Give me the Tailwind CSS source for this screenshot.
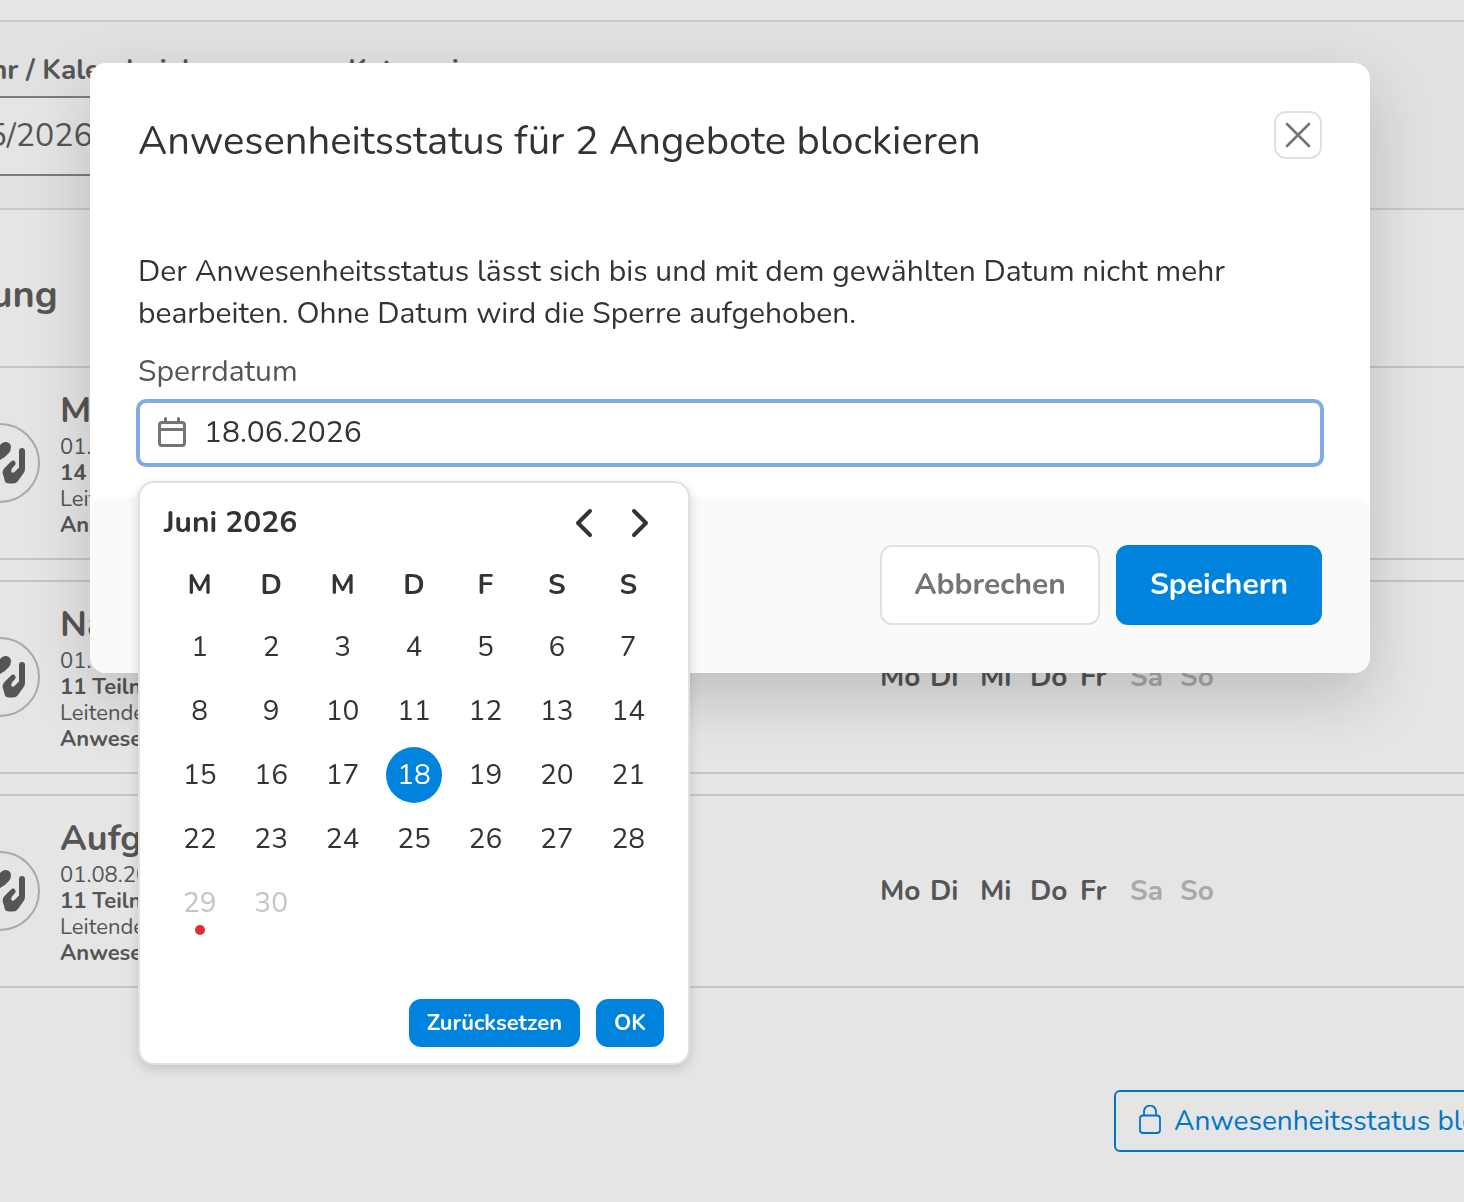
<!DOCTYPE html>
<html lang="de">
<head>
  <meta charset="UTF-8">
  <meta name="viewport" content="width=device-width, initial-scale=1.0">
  <title>Anwesenheitsstatus blockieren</title>
  <script src="https://cdn.jsdelivr.net/npm/@tailwindcss/browser@4"></script>
</head>
<body class="bg-[#e5e5e5] font-[Nunito,Lato,sans-serif] text-[#555] min-h-screen overflow-hidden">

  <!-- Shared icon shapes -->
  <svg class="hidden">
    <symbol id="logo" viewBox="0 0 80 80" fill="currentColor">
      <path d="M40 22q3-3.500 6-3 5 .5 5 5.500 0 3-2.500 6Q45 34.500 40 37q-5-2.500-8.500-6.500Q29 27.500 29 24.500q0-5 5-5.500 3-.5 6 3z"/>
      <path id="hand" d="M42.500 50q0-3 2-5l6-6q3-2.500 4.500-.5 1.500 2-.5 4l-2.500 3q-1.500 3 0 4 1 .8 2.500-.5l4.500-4.500V28a3 3 0 0 1 6 0v17.500q0 2-1 4l-6 8.500q-2 2.500-5 2.500h-3.500q-5 0-5-4z"/>
      <use href="#hand" transform="matrix(-1 0 0 1 80 0)"/>
    </symbol>
  </svg>

  <main class="overflow-hidden">
    <!-- Filter bar -->
    <section class="mt-5 border-y-2 border-[#c9c9c9] bg-[#e1e1e1] pt-7 pb-8">
      <div class="-ml-26 grid grid-cols-[408px_400px] gap-11">
        <div>
          <label for="year" class="block h-[46px] text-[28px] leading-10 font-bold whitespace-nowrap">Schuljahr / Kalenderjahr</label>
          <select id="year" class="block h-20 w-full appearance-none rounded-lg border-2 border-[#7c7c7c] bg-[#e5e5e5] px-8 text-[32px]">
            <option>2025/2026</option>
            <option>2026/2027</option>
          </select>
        </div>
        <div>
          <label for="category" class="block h-[46px] text-[28px] leading-10 font-bold">Kategorie</label>
          <select id="category" class="block h-20 w-full appearance-none rounded-lg border-2 border-[#7c7c7c] bg-[#e5e5e5] px-8 text-[32px]">
            <option>Alle</option>
          </select>
        </div>
      </div>
    </section>

    <h2 class="-ml-32 flex h-[156px] items-center pt-3 text-[38px] font-bold"><span class="w-46 text-right">Betreuung</span></h2>

    <!-- Offers -->
    <ul id="offers" class="flex flex-col gap-5">
      <li class="-ml-10 grid grid-cols-[80px_800px_auto] items-center justify-start gap-5 border-y-2 border-[#c5c5c5] py-5">
        <span class="flex size-20 items-center justify-center rounded-full border-2 border-[#a9a9a9]"><svg class="size-20 shrink-0"><use href="#logo"/></svg></span>
        <div class="text-[22px] leading-[26px]">
          <h3 class="text-[36px] leading-[46px] font-bold">Mittagstisch</h3>
          <p>01.08.2025 - 31.07.2026</p>
          <p class="font-bold">14 Teilnehmende</p>
          <p>Leitende: 2</p>
          <p class="font-bold">Anwesenheit offen</p>
        </div>
        <div class="grid grid-cols-[repeat(7,50px)] text-[28px] leading-10 font-bold">
          <span>Mo</span><span>Di</span><span>Mi</span><span>Do</span><span>Fr</span><span class="text-[#a9a9a9]">Sa</span><span class="text-[#a9a9a9]">So</span>
        </div>
      </li>
      <li class="-ml-10 grid grid-cols-[80px_800px_auto] items-center justify-start gap-5 border-y-2 border-[#c5c5c5] py-5">
        <span class="flex size-20 items-center justify-center rounded-full border-2 border-[#a9a9a9]"><svg class="size-20 shrink-0"><use href="#logo"/></svg></span>
        <div class="text-[22px] leading-[26px]">
          <h3 class="text-[36px] leading-[46px] font-bold">Nachmittag</h3>
          <p>01.08.2025 - 31.07.2026</p>
          <p class="font-bold">11 Teilnehmende</p>
          <p>Leitende: 2</p>
          <p class="font-bold">Anwesenheit offen</p>
        </div>
        <div class="grid grid-cols-[repeat(7,50px)] text-[28px] leading-10 font-bold">
          <span>Mo</span><span>Di</span><span>Mi</span><span>Do</span><span>Fr</span><span class="text-[#a9a9a9]">Sa</span><span class="text-[#a9a9a9]">So</span>
        </div>
      </li>
      <li class="-ml-10 grid grid-cols-[80px_800px_auto] items-center justify-start gap-5 border-y-2 border-[#c5c5c5] py-5">
        <span class="flex size-20 items-center justify-center rounded-full border-2 border-[#a9a9a9]"><svg class="size-20 shrink-0"><use href="#logo"/></svg></span>
        <div class="text-[22px] leading-[26px]">
          <h3 class="text-[36px] leading-[46px] font-bold">Aufgabenhilfe</h3>
          <p>01.08.2025 - 31.07.2026</p>
          <p class="font-bold">11 Teilnehmende</p>
          <p>Leitende: 2</p>
          <p class="font-bold">Anwesenheit offen</p>
        </div>
        <div class="grid grid-cols-[repeat(7,50px)] text-[28px] leading-10 font-bold">
          <span>Mo</span><span>Di</span><span>Mi</span><span>Do</span><span>Fr</span><span class="text-[#a9a9a9]">Sa</span><span class="text-[#a9a9a9]">So</span>
        </div>
      </li>
    </ul>

    <div class="-mr-[74px] mt-[102px] flex justify-end">
      <button class="flex h-[62px] w-106 items-center gap-2.5 rounded-md border-2 border-[#0076c6] px-5 text-[28px] whitespace-nowrap text-[#0076c6]">
        <svg class="h-8 w-7 shrink-0" viewBox="0 0 28 32" fill="none" stroke="currentColor" stroke-width="1.8">
          <rect x="4" y="10.500" width="20" height="17.500" rx="3"/>
          <path d="M8 10.500V6.500a6 6 0 0 1 12 0v4"/>
        </svg>
        Anwesenheitsstatus blockieren
      </button>
    </div>
  </main>

  <!-- Modal -->
  <div class="fixed inset-0 flex items-start justify-center pt-[63px] pr-1">
    <div role="dialog" aria-labelledby="modalTitle" class="w-full max-w-7xl rounded-2xl bg-white text-[#333] shadow-[0_24px_64px_rgba(0,0,0,0.175)]">
      <header class="flex items-start justify-between px-12 pt-12">
        <h1 id="modalTitle" class="text-[40px] leading-[60px]">Anwesenheitsstatus für 2 Angebote blockieren</h1>
        <button aria-label="Schliessen" class="flex size-12 items-center justify-center rounded-xl border-2 border-[#e1e1e1] text-[#757575]">
          <svg class="size-7 shrink-0" viewBox="0 0 28 28" fill="none" stroke="currentColor" stroke-width="2.6" stroke-linecap="round"><path d="M3 3l22 22M25 3L3 25"/></svg>
        </button>
      </header>

      <div class="px-12 pt-20 pb-[30px] text-[30px] leading-[42px]">
        <p>Der Anwesenheitsstatus lässt sich bis und mit dem gewählten Datum nicht mehr bearbeiten. Ohne Datum wird die Sperre aufgehoben.</p>
        <label for="lockDate" class="mt-4 mb-1.5 block text-[#555]">Sperrdatum</label>

        <div class="relative -mx-0.5">
          <input id="lockDate" type="text" value="18.06.2026" class="block h-[68px] w-full rounded-[10px] border-4 border-[#82abe6] pr-4 pb-0.5 pl-16 outline-none">
          <svg class="pointer-events-none absolute top-[18px] left-[22px] h-8 w-7 text-[#757575]" viewBox="0 0 28 32" fill="none" stroke="currentColor" stroke-width="3" stroke-linecap="round">
            <rect x="1.5" y="5.500" width="25" height="23" rx="2.500"/>
            <path d="M2 12.500h24M7.500 1.500V5M20.500 1.500V5"/>
          </svg>

          <!-- Date picker -->
          <div class="absolute top-full left-0.5 mt-3.5 w-[552px] rounded-2xl border-2 border-[#e1e1e1] bg-white px-6 pt-3 pb-4 text-[28px] shadow-[0_4px_12px_rgba(0,0,0,0.15)]">
            <div class="-mr-1 flex items-center">
              <span id="month" class="grow text-[30px] font-bold">Juni 2026</span>
              <button aria-label="Vorheriger Monat" class="flex size-14 items-center justify-center">
                <svg class="size-8" viewBox="0 0 32 32" fill="none" stroke="currentColor" stroke-width="4" stroke-linecap="round" stroke-linejoin="round"><path d="M22 4L10 16l12 12"/></svg>
              </button>
              <button aria-label="Nächster Monat" class="flex size-14 items-center justify-center">
                <svg class="size-8" viewBox="0 0 32 32" fill="none" stroke="currentColor" stroke-width="4" stroke-linecap="round" stroke-linejoin="round"><path d="M10 4l12 12-12 12"/></svg>
              </button>
            </div>

            <table aria-labelledby="month" class="w-full table-fixed text-center">
              <thead>
                <tr class="h-16 font-bold">
                  <th class="pt-1">M</th><th class="pt-1">D</th><th class="pt-1">M</th><th class="pt-1">D</th><th class="pt-1">F</th><th class="pt-1">S</th><th class="pt-1">S</th>
                </tr>
              </thead>
              <tbody>
                <tr class="h-16"><td>1</td><td>2</td><td>3</td><td>4</td><td>5</td><td>6</td><td>7</td></tr>
                <tr class="h-16"><td>8</td><td>9</td><td>10</td><td>11</td><td>12</td><td>13</td><td>14</td></tr>
                <tr class="h-16"><td>15</td><td>16</td><td>17</td><td><span class="mx-auto flex size-14 items-center justify-center rounded-full bg-[#0083dd] text-white">18</span></td><td>19</td><td>20</td><td>21</td></tr>
                <tr class="h-16"><td>22</td><td>23</td><td>24</td><td>25</td><td>26</td><td>27</td><td>28</td></tr>
                <tr class="h-16 text-[#c4c4c4]"><td class="relative">29<span class="absolute bottom-0 left-1/2 size-2.5 -translate-x-1/2 rounded-full bg-[#e02b35]"></span></td><td>30</td><td></td><td></td><td></td><td></td><td></td></tr>
                <tr class="h-16"><td colspan="7"></td></tr>
              </tbody>
            </table>

            <div class="flex justify-end gap-4 text-[22px] font-bold text-white">
              <button class="h-12 rounded-xl bg-[#0083dd] px-[18px]">Zurücksetzen</button>
              <button class="h-12 rounded-xl bg-[#0083dd] px-[18px]">OK</button>
            </div>
          </div>
        </div>
      </div>

      <footer class="flex justify-end gap-4 rounded-2xl bg-[#fafafa] p-12 text-[30px] font-bold">
        <button class="h-20 rounded-xl border-2 border-[#e1e1e1] bg-white px-8 pb-0.5 text-[#757575]">Abbrechen</button>
        <button class="h-20 rounded-xl bg-[#0083dd] px-[34px] pb-0.5 text-white">Speichern</button>
      </footer>
    </div>
  </div>

</body>
</html>
